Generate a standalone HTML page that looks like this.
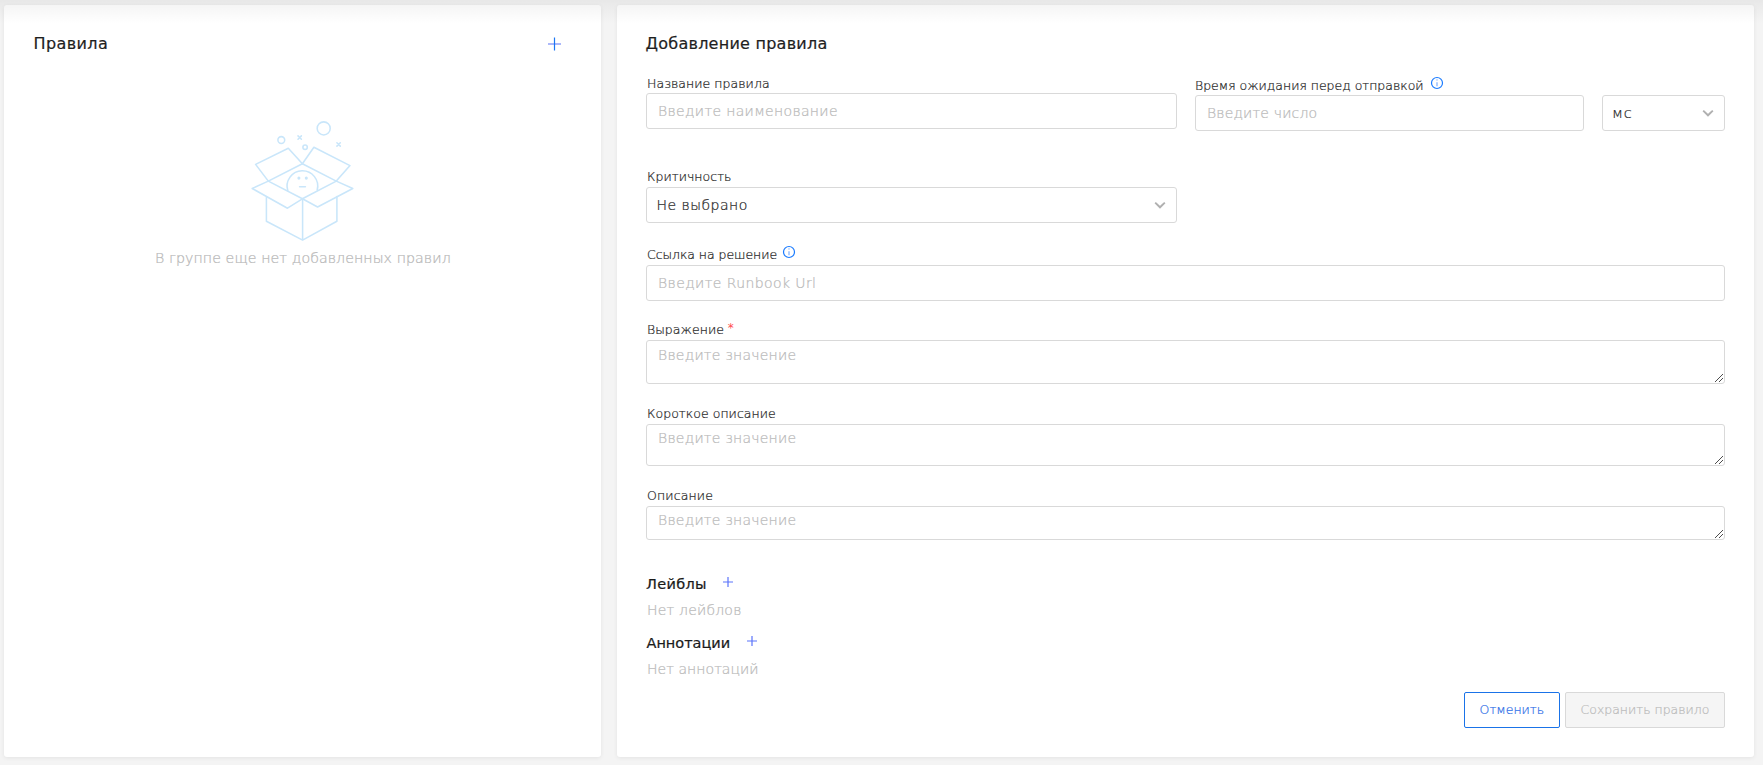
<!DOCTYPE html>
<html lang="ru">
<head>
<meta charset="utf-8">
<title>Правила</title>
<style>
*{box-sizing:border-box;margin:0;padding:0}
html,body{width:1763px;height:765px;overflow:hidden}
body{position:relative;background:#f4f4f4;font-family:"DejaVu Sans","Liberation Sans",sans-serif;color:#333;-webkit-font-smoothing:antialiased}
.panel{position:absolute;background:#fff;border-radius:3px;box-shadow:0 1px 4px rgba(0,0,0,.07)}
#left{left:4px;top:5px;width:597px;height:752px}
#right{left:617px;top:5px;width:1137px;height:752px}
.topshade{position:absolute;left:0;top:0;width:1763px;height:24px;background:linear-gradient(to bottom,rgba(0,0,0,.05) 0,rgba(0,0,0,.04) 5px,rgba(0,0,0,0) 24px);pointer-events:none}
.t{position:absolute;white-space:nowrap;line-height:20px;height:20px}
.h1{font-size:16px;font-weight:400;color:#1f1f1f;-webkit-text-stroke:0.2px #1f1f1f}
.lbl{font-size:12.5px;color:#2a2a2a;letter-spacing:0.05px;font-weight:200;-webkit-text-stroke:0.24px #2a2a2a}
.ph{font-size:14px;color:#bababa;font-weight:200;-webkit-text-stroke:0.24px #bababa}
.val{font-size:14px;color:#2a2a2a;font-weight:200;-webkit-text-stroke:0.24px #2a2a2a}
.h2{font-size:14.5px;font-weight:400;color:#1a1a1a;-webkit-text-stroke:0.22px #1a1a1a}
.box{position:absolute;border:1px solid #d9d9d9;border-radius:3px;background:#fff}
.btn{position:absolute;height:36px;border-radius:2px;top:692px}
svg{position:absolute;overflow:visible}
</style>
</head>
<body>
<div class="panel" id="left"></div>
<div class="panel" id="right"></div>
<div class="topshade"></div>

<!-- left panel -->
<h2 class="t h1" id="t_rules" style="left:33.5px;top:34px;letter-spacing:0.4px">Правила</h2>
<svg id="plus0" style="left:548px;top:37px" width="13" height="14" viewBox="0 0 13 14"><path d="M0 7H13" stroke="#7f92f7" stroke-width="1.3" fill="none"/><path d="M6.5 0.5V13.5" stroke="#1a76f2" stroke-width="1.2" fill="none"/></svg>

<svg id="emptybox" style="left:240px;top:110px" width="130" height="140" viewBox="240 110 130 140" fill="none" stroke="#c9e6fa" stroke-width="1.55" stroke-linejoin="round" stroke-linecap="round">
  <circle cx="323.7" cy="128.4" r="6.5"/>
  <circle cx="281.3" cy="140" r="3.4"/>
  <circle cx="305.1" cy="147.2" r="2.2"/>
  <path d="M298 135.9l3.4 3.4m0-3.4l-3.4 3.4M336.9 142.7l3.4 3.4m0-3.4l-3.4 3.4"/>
  <path d="M302.4 163.7L288.3 148.3L255.6 164.4L268.3 181.1"/>
  <path d="M302.4 163.7L313.9 147.2L350 165.6L336.3 181.1"/>
  <path d="M268.3 181.1L302.4 163.7L336.3 181.1L302.4 198.8Z"/>
  <path d="M268.3 181.1L252.2 188.5L287.5 208.2L302.4 198.8"/>
  <path d="M336.3 181.1L352.8 188.5L317.6 207L302.4 198.8"/>
  <path d="M266.4 197.6V221.2L302.6 240.1L336.9 221.2V196.5M302.6 198.8V240"/>
  <path d="M287.8 190.6A15.3 15.3 0 1 1 317.2 190"/>
  <circle cx="298.9" cy="178.1" r="1.55" fill="#c9e6fa" stroke="none"/>
  <circle cx="306.3" cy="178.1" r="1.55" fill="#c9e6fa" stroke="none"/>
  <path d="M299.6 186.7H305.4"/>
</svg>
<div class="t ph" id="t_empty" style="left:155px;top:248px;font-size:14.2px;color:#b8b8b8;-webkit-text-stroke:0.24px #b8b8b8;letter-spacing:0.07px">В группе еще нет добавленных правил</div>

<!-- right panel -->
<h2 class="t h1" id="t_add" style="left:645.5px;top:34px;letter-spacing:0.25px">Добавление правила</h2>

<label class="t lbl" id="l_name" style="left:647px;top:74px">Название правила</label>
<div class="box" id="i_name" style="left:646px;top:93px;width:531px;height:36px"></div>
<div class="t ph" id="p_name" style="left:658px;top:101px;letter-spacing:0.34px">Введите наименование</div>

<label class="t lbl" id="l_wait" style="left:1195px;top:76px;letter-spacing:0">Время ожидания перед отправкой</label>
<svg class="info" id="info1" style="left:1430px;top:76px" width="14" height="14" viewBox="0 0 14 14"><circle cx="7" cy="7" r="5.5" fill="none" stroke="#1a7bff" stroke-width="1.2"/><path d="M7 6.2V10.2" stroke="#6fa6ff" stroke-width="1.1"/><circle cx="7" cy="3.9" r="0.7" fill="#6fa6ff"/></svg>
<div class="box" id="i_wait" style="left:1195px;top:95px;width:389px;height:36px"></div>
<div class="t ph" id="p_wait" style="left:1207px;top:103px;letter-spacing:0.16px">Введите число</div>

<div class="box" id="s_unit" style="left:1602px;top:95px;width:123px;height:36px"></div>
<div class="t val" id="v_unit" style="left:1612px;top:103px;letter-spacing:0.7px;font-size:14.5px">мс</div>
<svg id="chev1" style="left:1702px;top:109px" width="12" height="8" viewBox="0 0 12 8"><path d="M1.2 1.6L6 6.3L10.8 1.6" fill="none" stroke="#b0b0b0" stroke-width="1.9"/></svg>

<label class="t lbl" id="l_crit" style="left:647px;top:167px">Критичность</label>
<div class="box" id="s_crit" style="left:646px;top:187px;width:531px;height:36px"></div>
<div class="t val" id="v_crit" style="left:656.5px;top:195px;letter-spacing:0.5px">Не выбрано</div>
<svg id="chev2" style="left:1154px;top:201px" width="12" height="8" viewBox="0 0 12 8"><path d="M1.2 1.6L6 6.3L10.8 1.6" fill="none" stroke="#b0b0b0" stroke-width="1.9"/></svg>

<label class="t lbl" id="l_link" style="left:647px;top:245px;letter-spacing:-0.05px">Ссылка на решение</label>
<svg class="info" id="info2" style="left:782px;top:245px" width="14" height="14" viewBox="0 0 14 14"><circle cx="7" cy="7" r="5.5" fill="none" stroke="#1a7bff" stroke-width="1.2"/><path d="M7 6.2V10.2" stroke="#6fa6ff" stroke-width="1.1"/><circle cx="7" cy="3.9" r="0.7" fill="#6fa6ff"/></svg>
<div class="box" id="i_link" style="left:646px;top:265px;width:1079px;height:36px"></div>
<div class="t ph" id="p_link" style="left:658px;top:273px;letter-spacing:0.4px">Введите Runbook Url</div>

<label class="t lbl" id="l_expr" style="left:647px;top:320px">Выражение</label>
<div class="t" id="star" style="left:727.8px;top:318px;font-size:12px;color:#ff4d4f">*</div>
<div class="box" id="ta_expr" style="left:646px;top:340px;width:1079px;height:44px"></div>
<svg class="grip" style="left:1714px;top:373px" width="10" height="10" viewBox="0 0 10 10"><path d="M1 9L9 1M5 9L9 5" stroke="#4d4d4d" stroke-width="1" fill="none"/></svg>
<div class="t ph" id="p_expr" style="left:658px;top:345px;letter-spacing:0.23px">Введите значение</div>

<label class="t lbl" id="l_short" style="left:647px;top:404px">Короткое описание</label>
<div class="box" id="ta_short" style="left:646px;top:424px;width:1079px;height:42px"></div>
<svg class="grip" style="left:1714px;top:455px" width="10" height="10" viewBox="0 0 10 10"><path d="M1 9L9 1M5 9L9 5" stroke="#4d4d4d" stroke-width="1" fill="none"/></svg>
<div class="t ph" id="p_short" style="left:658px;top:428px;letter-spacing:0.23px">Введите значение</div>

<label class="t lbl" id="l_desc" style="left:647px;top:486px;letter-spacing:0.15px">Описание</label>
<div class="box" id="ta_desc" style="left:646px;top:506px;width:1079px;height:34px"></div>
<svg class="grip" style="left:1714px;top:529px" width="10" height="10" viewBox="0 0 10 10"><path d="M1 9L9 1M5 9L9 5" stroke="#4d4d4d" stroke-width="1" fill="none"/></svg>
<div class="t ph" id="p_desc" style="left:658px;top:510px;letter-spacing:0.23px">Введите значение</div>

<h3 class="t h2" id="h_labels" style="left:646px;top:574px;letter-spacing:0.3px">Лейблы</h3>
<svg id="plus1" style="left:723px;top:577px" width="10" height="10" viewBox="0 0 10 10"><path d="M0 5H10M5 0V10" stroke="#5b74fb" stroke-width="1.2" fill="none"/></svg>
<div class="t ph" id="n_labels" style="left:647px;top:600px;letter-spacing:0.2px">Нет лейблов</div>

<h3 class="t h2" id="h_ann" style="left:646.5px;top:633px;letter-spacing:-0.02px">Аннотации</h3>
<svg id="plus2" style="left:746.6px;top:636px" width="10" height="10" viewBox="0 0 10 10"><path d="M0 5H10M5 0V10" stroke="#5b74fb" stroke-width="1.2" fill="none"/></svg>
<div class="t ph" id="n_ann" style="left:647px;top:659px;letter-spacing:0.05px">Нет аннотаций</div>

<div class="btn" id="b_cancel" style="left:1464px;width:96px;border:1px solid #1a73e8;background:#fff"></div>
<div class="t" id="t_cancel" style="left:1479.6px;top:700px;font-size:12.5px;color:#2f6fe8;font-weight:200;-webkit-text-stroke:0.22px #2f6fe8;letter-spacing:0">Отменить</div>
<div class="btn" id="b_save" style="left:1565px;width:160px;border:1px solid #d9d9d9;background:#f5f5f5"></div>
<div class="t" id="t_save" style="left:1580.5px;top:700px;font-size:12.5px;color:#bbb;font-weight:200;-webkit-text-stroke:0.22px #bbb">Сохранить правило</div>
</body>
</html>
